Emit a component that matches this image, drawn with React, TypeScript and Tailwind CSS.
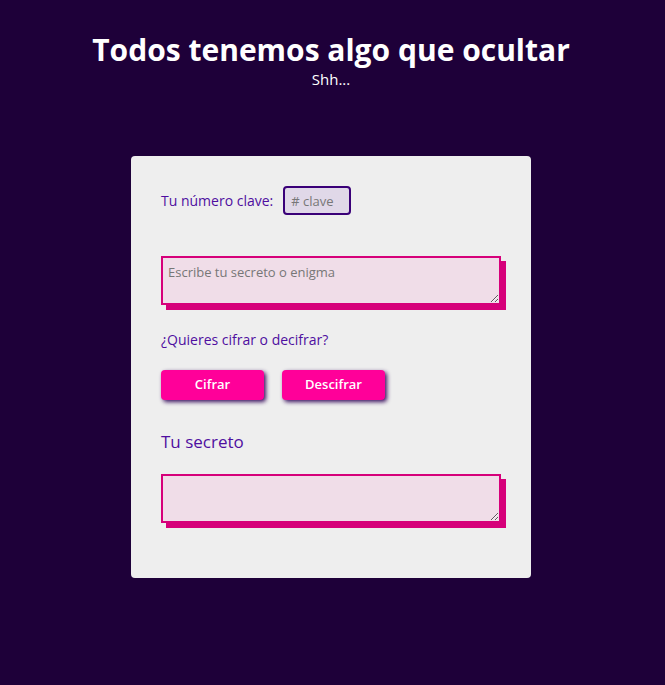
export default function App() {
  const font = { fontFamily: '"Open Sans", "Noto Sans", sans-serif' };
  return (
    <div className="min-h-[685px] w-full bg-[#1e0039] flex flex-col items-center pr-[3px]" style={font}>
      <div className="pt-[30px] flex flex-col items-center">
        <h1 className="text-[30px] leading-[40px] font-bold text-white">Todos tenemos algo que ocultar</h1>
        <p className="text-[15px] leading-[18px] text-white">Shh...</p>
      </div>
      <div className="mt-[68px] w-[400px] rounded-[4px] bg-[#eeeeee] px-[30px] pt-[30px] pb-[55px] flex flex-col">
        <div className="flex items-center gap-[10px]">
          <label className="text-[14px] text-[#4f0ea0]">Tu número clave:</label>
          <input
            type="text"
            placeholder="# clave"
            className="w-[68px] h-[29px] rounded-[4px] border-2 border-[#3a0078] bg-[#e0d8e8] px-[6px] text-[13px] text-[#444] placeholder:text-[#777] outline-none"
          />
        </div>
        <textarea
          placeholder="Escribe tu secreto o enigma"
          className="mt-[41px] w-[340px] h-[49px] border-2 border-[#d6007a] bg-[#f0dde8] shadow-[5px_5px_0_#d6007a] px-[5px] py-[5px] text-[13px] leading-[18px] text-[#444] placeholder:text-[#777] outline-none block"
        />
        <p className="mt-[25px] text-[14px] leading-[20px] text-[#4f0ea0]">¿Quieres cifrar o decifrar?</p>
        <div className="mt-[20px] flex gap-[18px]">
          <button className="w-[103px] h-[30px] rounded-[4px] bg-[#ff0099] text-white text-[13px] font-semibold shadow-[2px_2px_4px_#3a1060]">Cifrar</button>
          <button className="w-[103px] h-[30px] rounded-[4px] bg-[#ff0099] text-white text-[13px] font-semibold shadow-[2px_2px_4px_#3a1060]">Descifrar</button>
        </div>
        <h2 className="mt-[30px] text-[17px] leading-[24px] text-[#4f0ea0]">Tu secreto</h2>
        <textarea
          className="mt-[20px] w-[340px] h-[49px] border-2 border-[#d6007a] bg-[#f0dde8] shadow-[5px_5px_0_#d6007a] px-[5px] py-[5px] text-[13px] text-[#444] outline-none block"
        />
      </div>
    </div>
  );
}
